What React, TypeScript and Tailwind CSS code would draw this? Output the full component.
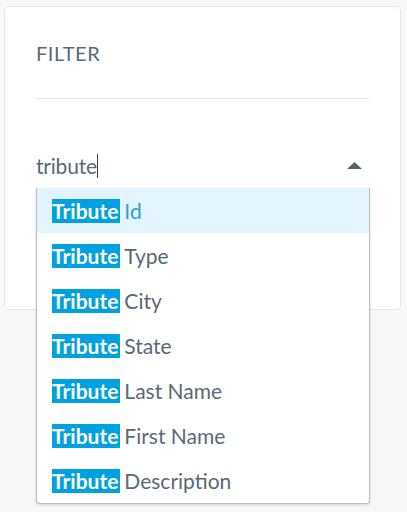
import { useState } from 'react'

const OPTIONS = ['Id', 'Type', 'City', 'State', 'Last Name', 'First Name', 'Description']

export default function App() {
  const [query] = useState('tribute')
  const active = 0

  return (
    <div
      className="min-h-[512px] bg-[#f8f8f8] pt-[6px] pl-[4px] pr-[6px]"
      style={{ fontFamily: 'Lato, "Open Sans", sans-serif' }}
    >
      <div className="relative h-[304px] rounded-[5px] border border-[#e6e6e6] bg-white px-[31px]">
        <div className="pt-[32px] text-[20px] leading-[28px] tracking-[0.5px] text-[#5a6a75]">FILTER</div>
        <div className="mt-[31px] h-px bg-[#e6e6e6]" />

        <div className="relative mt-[52px] flex h-[30px] items-center">
          <span className="text-[21px] tracking-[-0.2px] text-[#5a6a75]">{query}</span>
          <span className="h-[24px] w-px bg-[#3a3a3a]" />
          <svg className="ml-auto mr-[7px]" width="15" height="8" viewBox="0 0 15 8">
            <path d="M7.5 0 L15 7 L0 7 Z" fill="#55646e" />
          </svg>
        </div>

        {/* Dropdown list */}
        <ul className="absolute left-[31px] right-[30px] top-[181px] z-10 rounded-b-[4px] border border-t-0 border-[#bdbdbd] bg-white shadow-[0_1px_3px_rgba(0,0,0,0.15)]">
          {OPTIONS.map((opt, i) => (
            <li
              key={opt}
              className={`flex h-[45px] items-center pl-[15px] text-[21px] ${
                i === active ? 'bg-[#e4f4fc] text-[#2a9fd6]' : 'text-[#5a6a75]'
              }`}
            >
              <span className="bg-[#00a1e0] pr-[2px] font-bold leading-[24px] text-white">Tribute</span>
              <span className="ml-[4px]">{opt}</span>
            </li>
          ))}
        </ul>
      </div>
    </div>
  )
}
